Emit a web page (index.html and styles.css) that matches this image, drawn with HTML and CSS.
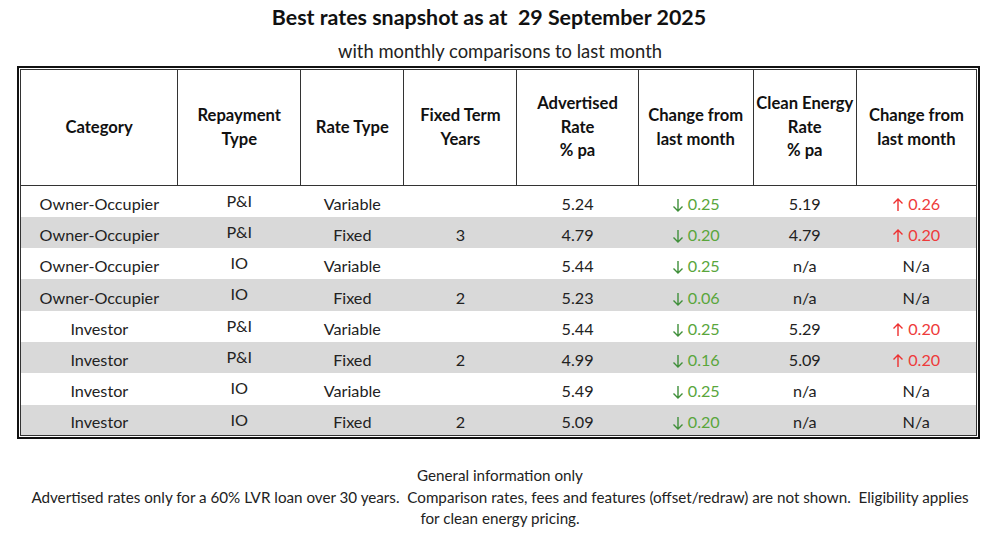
FILE: index.html
```html
<!DOCTYPE html>
<html lang="en">
<head>
<meta charset="utf-8">
<title>Best rates snapshot</title>
<link rel="stylesheet" href="styles.css">
</head>
<body>
<main class="page">
  <h1 class="title">Best rates snapshot as at&nbsp; 29 September 2025</h1>
  <p class="subtitle">with monthly comparisons to last month</p>
  <div class="frame">
    <table class="rates">
      <colgroup>
        <col class="c1"><col class="c2"><col class="c3"><col class="c4"><col class="c5"><col class="c6"><col class="c7"><col class="c8">
      </colgroup>
      <thead>
        <tr>
          <th>Category</th>
          <th>Repayment<br>Type</th>
          <th>Rate Type</th>
          <th>Fixed Term<br>Years</th>
          <th>Advertised<br>Rate<br>% pa</th>
          <th>Change from<br>last month</th>
          <th>Clean Energy<br>Rate<br>% pa</th>
          <th>Change from<br>last month</th>
        </tr>
      </thead>
      <tbody>
        <tr>
          <td>Owner-Occupier</td><td class="rep">P&amp;I</td><td>Variable</td><td></td><td>5.24</td>
          <td class="down"><svg class="arrow" viewBox="0 0 12 14"><path d="M6 1V13M1.5 8.5L6 13L10.5 8.5"/></svg> 0.25</td>
          <td>5.19</td>
          <td class="up"><svg class="arrow" viewBox="0 0 12 14"><path d="M6 13V1M1.5 5.5L6 1L10.5 5.5"/></svg> 0.26</td>
        </tr>
        <tr class="alt">
          <td>Owner-Occupier</td><td class="rep">P&amp;I</td><td>Fixed</td><td>3</td><td>4.79</td>
          <td class="down"><svg class="arrow" viewBox="0 0 12 14"><path d="M6 1V13M1.5 8.5L6 13L10.5 8.5"/></svg> 0.20</td>
          <td>4.79</td>
          <td class="up"><svg class="arrow" viewBox="0 0 12 14"><path d="M6 13V1M1.5 5.5L6 1L10.5 5.5"/></svg> 0.20</td>
        </tr>
        <tr>
          <td>Owner-Occupier</td><td class="rep">IO</td><td>Variable</td><td></td><td>5.44</td>
          <td class="down"><svg class="arrow" viewBox="0 0 12 14"><path d="M6 1V13M1.5 8.5L6 13L10.5 8.5"/></svg> 0.25</td>
          <td>n/a</td><td>N/a</td>
        </tr>
        <tr class="alt">
          <td>Owner-Occupier</td><td class="rep">IO</td><td>Fixed</td><td>2</td><td>5.23</td>
          <td class="down"><svg class="arrow" viewBox="0 0 12 14"><path d="M6 1V13M1.5 8.5L6 13L10.5 8.5"/></svg> 0.06</td>
          <td>n/a</td><td>N/a</td>
        </tr>
        <tr>
          <td>Investor</td><td class="rep">P&amp;I</td><td>Variable</td><td></td><td>5.44</td>
          <td class="down"><svg class="arrow" viewBox="0 0 12 14"><path d="M6 1V13M1.5 8.5L6 13L10.5 8.5"/></svg> 0.25</td>
          <td>5.29</td>
          <td class="up"><svg class="arrow" viewBox="0 0 12 14"><path d="M6 13V1M1.5 5.5L6 1L10.5 5.5"/></svg> 0.20</td>
        </tr>
        <tr class="alt">
          <td>Investor</td><td class="rep">P&amp;I</td><td>Fixed</td><td>2</td><td>4.99</td>
          <td class="down"><svg class="arrow" viewBox="0 0 12 14"><path d="M6 1V13M1.5 8.5L6 13L10.5 8.5"/></svg> 0.16</td>
          <td>5.09</td>
          <td class="up"><svg class="arrow" viewBox="0 0 12 14"><path d="M6 13V1M1.5 5.5L6 1L10.5 5.5"/></svg> 0.20</td>
        </tr>
        <tr>
          <td>Investor</td><td class="rep">IO</td><td>Variable</td><td></td><td>5.49</td>
          <td class="down"><svg class="arrow" viewBox="0 0 12 14"><path d="M6 1V13M1.5 8.5L6 13L10.5 8.5"/></svg> 0.25</td>
          <td>n/a</td><td>N/a</td>
        </tr>
        <tr class="alt">
          <td>Investor</td><td class="rep">IO</td><td>Fixed</td><td>2</td><td>5.09</td>
          <td class="down"><svg class="arrow" viewBox="0 0 12 14"><path d="M6 1V13M1.5 8.5L6 13L10.5 8.5"/></svg> 0.20</td>
          <td>n/a</td><td>N/a</td>
        </tr>
      </tbody>
    </table>
  </div>
  <div class="notes">
    <p>General information only</p>
    <p>Advertised rates only for a 60% LVR loan over 30 years.&nbsp; Comparison rates, fees and features (offset/redraw) are not shown.&nbsp; Eligibility applies<br>for clean energy pricing.</p>
  </div>
</main>
</body>
</html>
```

FILE: styles.css
```css
* { box-sizing: border-box; }

html, body {
  margin: 0;
  padding: 0;
  background: #ffffff;
}

body {
  font-family: Lato, "Open Sans", "Liberation Sans", sans-serif;
  color: #1c1c1c;
}

.page {
  width: 1000px;
}

.title {
  margin: 0;
  padding: 4px 22px 0 0;
  font-size: 21.4px;
  line-height: 26px;
  font-weight: 700;
  text-align: center;
  color: #111;
}

.subtitle {
  margin: 10px 0 4px;
  font-size: 18.4px;
  line-height: 22px;
  text-align: center;
  color: #222;
}

.frame {
  margin-left: 17px;
  width: 963px;
  border: 2px solid #111;
  padding: 1px;
}

.rates {
  width: 957px;
  border: 1px solid #333;
  border-collapse: collapse;
  table-layout: fixed;
  font-size: 16.2px;
}

.c1 { width: 157px; }
.c2 { width: 123px; }
.c3 { width: 103px; }
.c4 { width: 113px; }
.c5 { width: 121px; }
.c6 { width: 115px; }
.c7 { width: 103px; }
.c8 { width: 120px; }

.rates th {
  height: 116px;
  padding: 0;
  font-weight: 700;
  font-size: 16.6px;
  line-height: 23.5px;
  text-align: center;
  vertical-align: middle;
  border-left: 1px solid #333;
  border-bottom: 1px solid #333;
  color: #111;
  white-space: nowrap;
}

.rates th:first-child { border-left: none; }

.rates td {
  height: 31.3px;
  padding: 5px 0 0;
  text-align: center;
  vertical-align: middle;
  line-height: 20px;
  color: #222;
  white-space: nowrap;
}

.rates td.rep {
  vertical-align: top;
  padding-top: 5px;
}

.rates tr.alt td {
  background: #d9d9d9;
}

.down { color: #5aa63c !important; }
.up { color: #ee3b3b !important; }

.arrow {
  width: 12px;
  height: 14px;
  vertical-align: -2px;
  fill: none;
  stroke-width: 1.4;
}

.down .arrow { stroke: #3f8f3a; }
.up .arrow { stroke: #ee3030; }

.notes {
  margin-top: 26px;
  text-align: center;
  font-size: 15.2px;
  line-height: 21.5px;
  color: #222;
}

.notes p {
  margin: 0;
}
```
